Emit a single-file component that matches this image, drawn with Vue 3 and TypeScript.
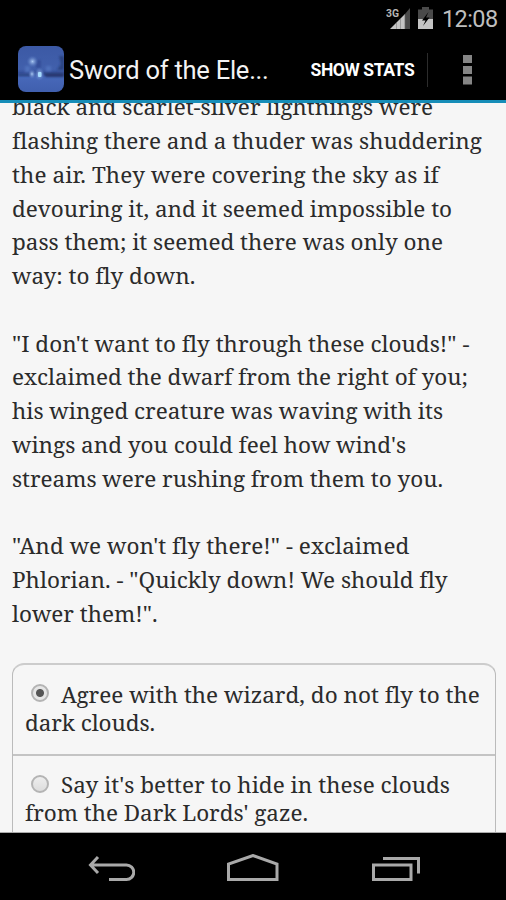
<script setup lang="ts">
interface Line { text: string; width: number }
interface Option { id: number; lines: Line[]; selected: boolean }

const serif = '22.5px "Noto Serif", "Droid Serif", "DejaVu Serif Condensed", "DejaVu Serif", serif'

const paragraphs: Line[][] = [
  [
    { text: 'black and scarlet-silver lightnings were', width: 421 },
    { text: 'flashing there and a thuder was shuddering', width: 469.5 },
    { text: 'the air. They were covering the sky as if', width: 427 },
    { text: 'devouring it, and it seemed impossible to', width: 440 },
    { text: 'pass them; it seemed there was only one', width: 431 },
    { text: 'way: to fly down.', width: 183 },
  ],
  [
    { text: '"I don\'t want to fly through these clouds!" -', width: 457 },
    { text: 'exclaimed the dwarf from the right of you;', width: 456 },
    { text: 'his winged creature was waving with its', width: 431 },
    { text: 'wings and you could feel how wind\'s', width: 394 },
    { text: 'streams were rushing from them to you.', width: 431 },
  ],
  [
    { text: '"And we won\'t fly there!" - exclaimed', width: 397 },
    { text: 'Phlorian. - "Quickly down! We should fly', width: 435 },
    { text: 'lower them!".', width: 145.5 },
  ],
]

const options: Option[] = [
  {
    id: 1,
    selected: true,
    lines: [
      { text: 'Agree with the wizard, do not fly to the', width: 418.5 },
      { text: 'dark clouds.', width: 130 },
    ],
  },
  {
    id: 2,
    selected: false,
    lines: [
      { text: 'Say it\'s better to hide in these clouds', width: 389 },
      { text: 'from the Dark Lords\' gaze.', width: 283 },
    ],
  },
]

// Tracks each line so that it fills its measure whichever serif is installed.
const ctx = document.createElement('canvas').getContext('2d')
function tracking(line: Line) {
  if (!ctx) return {}
  ctx.font = serif
  const natural = ctx.measureText(line.text).width
  return { letterSpacing: `${((line.width - natural) / line.text.length).toFixed(3)}px` }
}
</script>

<template>
  <div class="phone">
    <header class="status">
      <svg class="signal" width="26" height="24" viewBox="0 0 26 24">
        <text class="net" x="0" y="10.500" textLength="13" lengthAdjust="spacingAndGlyphs">3G</text>
        <path d="M4 23 19 8V23Z" fill="#c4c4c4" />
        <path d="M19 8 24 2V23H19Z" fill="#4a4a4a" />
        <path d="M10.500 17V23M14.500 13V23M18.700 9V23" stroke="#888" stroke-width=".7" />
      </svg>
      <svg class="battery" width="16" height="24" viewBox="0 0 16 24">
        <path d="M4 1H11V3.500H15V13H0V3.500H4Z" fill="#4a4a4a" />
        <path d="M0 13H15V23H0Z" fill="#c4c4c4" />
        <path d="M10.500 6 4 14.500H7.500L5 20 11.500 11.500H8Z" fill="#000" />
      </svg>
      <span class="clock">12:08</span>
    </header>

    <nav class="bar">
      <svg class="logo" width="46" height="46" viewBox="0 0 46 46">
        <defs>
          <linearGradient id="sky" x1="0" y1="0" x2="0" y2="1">
            <stop offset="0" stop-color="#3c59a5" />
            <stop offset=".5" stop-color="#4160ac" />
            <stop offset=".58" stop-color="#36509a" />
            <stop offset=".68" stop-color="#4768b9" />
            <stop offset="1" stop-color="#405fae" />
          </linearGradient>
          <radialGradient id="glow">
            <stop offset="0" stop-color="#a9c8f2" />
            <stop offset="1" stop-color="#5578c2" stop-opacity="0" />
          </radialGradient>
          <filter id="soft"><feGaussianBlur stdDeviation="1" /></filter>
          <clipPath id="tile"><rect width="46" height="46" rx="8" /></clipPath>
        </defs>
        <g clip-path="url(#tile)">
          <rect width="46" height="46" fill="url(#sky)" />
          <g filter="url(#soft)">
            <path d="M25 27H46V31H28Z" fill="#25376f" />
            <path d="M0 28H13V30H0Z" fill="#2b3f7d" />
            <path d="M41 10H46V24H39L43 18Z" fill="#2b427f" />
            <path d="M18 14H23V22H18Z" fill="#36509a" />
            <path d="M7 20H12V26H7ZM28 20H33V25H28Z" fill="#5070bb" />
          </g>
          <circle cx="14.500" cy="15.500" r="6" fill="url(#glow)" />
          <ellipse cx="14" cy="28" rx="4" ry="5" fill="url(#glow)" />
          <ellipse cx="21.500" cy="28" rx="5" ry="7" fill="url(#glow)" />
          <rect x="20" y="26" width="3.500" height="5" rx="1" fill="#a6dcff" />
        </g>
      </svg>
      <h1 class="title">Sword of the Ele...</h1>
      <button class="stats">SHOW STATS</button>
      <span class="rule"></span>
      <svg class="more" width="9" height="30" viewBox="0 0 9 30">
        <path d="M0 0H9V8H0ZM0 11H9V19H0ZM0 21.500H9V29.500H0Z" fill="#858585" />
      </svg>
    </nav>

    <main class="page">
      <p v-for="(p, i) in paragraphs" :key="i" class="para">
        <span v-for="l in p" :key="l.text" class="line" :style="tracking(l)">{{ l.text }}</span>
      </p>
      <div class="choices">
        <label v-for="o in options" :key="o.id" class="choice">
          <span class="first">
            <span class="radio" :class="{ on: o.selected }"></span>
            <span class="line" :style="tracking(o.lines[0])">{{ o.lines[0].text }}</span>
          </span>
          <span class="line" :style="tracking(o.lines[1])">{{ o.lines[1].text }}</span>
        </label>
      </div>
    </main>

    <footer class="keys">
      <svg width="48" height="28" viewBox="0 0 48 28">
        <path d="M11 3 3.500 11 11 19M3.500 11H39.500A7.250 7.250 0 0 1 39.500 25.500H22" />
      </svg>
      <svg width="54" height="28" viewBox="0 0 54 28">
        <path d="M2.500 25.500V10L27 1.500 51 10V25.500Z" />
      </svg>
      <svg width="50" height="28" viewBox="0 0 50 28">
        <path d="M2.500 11H40V25.500H2.500ZM12 4.500H47.500V19.500" />
      </svg>
    </footer>
  </div>
</template>

<style>
body { margin: 0; background: #000; }
</style>

<style scoped>
.phone {
  width: 506px;
  height: 900px;
  display: flex;
  flex-direction: column;
  overflow: hidden;
  background: #000;
  font-family: Roboto, "Liberation Sans", sans-serif;
}
.status {
  box-sizing: border-box;
  flex: 0 0 36px;
  height: 36px;
  padding: 6px 8px 0 0;
  display: flex;
  justify-content: flex-end;
  align-items: flex-start;
}
.net { font: 700 11px Roboto, sans-serif; fill: #b5b5b5; }
.signal { margin-right: 6px; }
.battery { margin-right: 8px; }
.clock { width: 56px; font-size: 23.5px; line-height: 26px; color: #bebebe; white-space: nowrap; letter-spacing: -.6px; }
.bar {
  box-sizing: border-box;
  flex: 0 0 67px;
  height: 67px;
  padding: 0 34px 0 18px;
  display: flex;
  align-items: center;
  border-bottom: 3px solid #168db8;
}
.logo { margin-top: 1px; }
.title { margin: 3px 0 0 5px; width: 241.5px; font-size: 25.5px; line-height: 32px; font-weight: 400; color: #f3f3f3; white-space: nowrap; letter-spacing: -.25px; }
.stats { width: 105px; padding: 0; border: 0; background: none; color: #fff; font: 700 17.5px/22px Roboto, sans-serif; letter-spacing: -.4px; white-space: nowrap; margin-top: 3px; text-align: left; }
.rule { width: 1px; height: 34px; margin: 3px 0 0 11px; background: #2c2c2c; }
.more { margin: 3px 0 0 auto; }
.page {
  flex: 0 0 730px;
  height: 730px;
  box-sizing: border-box;
  overflow: hidden;
  padding: 0 10px 0 12px;
  background: #f6f6f6;
  color: #2b2b2b;
  border-bottom: 1px solid #aaa;
  font: 22.5px/33.75px "Noto Serif", "Droid Serif", "DejaVu Serif Condensed", "DejaVu Serif", serif;
}
.para { margin: 0 0 33.75px; }
.para:first-child { margin-top: -12.6px; }
.line { display: block; white-space: nowrap; }
.choices {
  box-sizing: border-box;
  height: 240px;
  margin-top: -1px;
  border: 1.5px solid #bbb;
  border-top: 2px solid #ccc;
  border-radius: 12px;
}
.choice {
  box-sizing: border-box;
  display: block;
  height: 88.5px;
  padding: 15.5px 0 0 12px;
  line-height: 28.3px;
}
.choice + .choice { border-top: 2px solid #c4c4c4; }
.first { display: flex; align-items: center; }
.radio {
  box-sizing: border-box;
  width: 18px;
  height: 18px;
  margin: 0 12px 3px 6px;
  border: 2px solid #b4b4b4;
  border-radius: 50%;
  background: linear-gradient(#eee, #ddd);
}
.radio.on { background: radial-gradient(circle, #555 0 3.5px, #e6e6e6 4.5px); }
.keys {
  flex: 1;
  display: flex;
  justify-content: space-between;
  align-items: center;
  padding: 3px 85px 0 87px;
}
.keys path { fill: none; stroke: #a9a9a9; stroke-width: 3; }
</style>
